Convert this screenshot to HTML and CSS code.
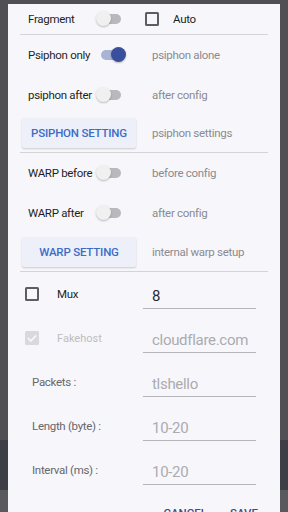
FILE: index.html
```html
<!DOCTYPE html>
<html>
<head>
<meta charset="utf-8">
<link rel="stylesheet" href="styles.css">
</head>
<body>
<div class="dialog">
  <div class="row r1">
    <div class="cell">
      <span class="label sl">Fragment</span>
      <span class="switch"><span class="track"></span><span class="thumb"></span></span>
    </div>
    <div class="cell2 cb-cell"><span class="checkbox"></span><span class="label auto">Auto</span></div>
  </div>
  <div class="divider"></div>
  <div class="row r40">
    <div class="cell">
      <span class="label sl">Psiphon only</span>
      <span class="switch on"><span class="track"></span><span class="thumb"></span></span>
    </div>
    <div class="cell2 hint">psiphon alone</div>
  </div>
  <div class="row r39">
    <div class="cell">
      <span class="label sl">psiphon after</span>
      <span class="switch"><span class="track"></span><span class="thumb"></span></span>
    </div>
    <div class="cell2 hint">after config</div>
  </div>
  <div class="row rbtn">
    <div class="cell"><button class="btn">PSIPHON SETTING</button></div>
    <div class="cell2 hint">psiphon settings</div>
  </div>
  <div class="divider"></div>
  <div class="row r40">
    <div class="cell">
      <span class="label sl">WARP before</span>
      <span class="switch"><span class="track"></span><span class="thumb"></span></span>
    </div>
    <div class="cell2 hint">before config</div>
  </div>
  <div class="row r40">
    <div class="cell">
      <span class="label sl">WARP after</span>
      <span class="switch"><span class="track"></span><span class="thumb"></span></span>
    </div>
    <div class="cell2 hint">after config</div>
  </div>
  <div class="row rbtn">
    <div class="cell"><button class="btn">WARP SETTING</button></div>
    <div class="cell2 hint">internal warp setup</div>
  </div>
  <div class="divider"></div>
  <div class="frow">
    <div class="fcell"><span class="checkbox"></span><span class="label mux">Mux</span></div>
    <div class="input"><span class="val">8</span></div>
  </div>
  <div class="frow">
    <div class="fcell"><span class="checkbox checked"><svg viewBox="0 0 14 14" width="14" height="14"><rect x="0" y="0" width="14" height="14" rx="1.5" fill="#d9d9dc"/><path d="M3 7.2 L5.8 10 L11.2 4.4" fill="none" stroke="#f7f7fb" stroke-width="1.8"/></svg></span><span class="label fake">Fakehost</span></div>
    <div class="input"><span class="val ph">cloudflare.com</span></div>
  </div>
  <div class="frow">
    <div class="fcell"><span class="plabel">Packets :</span></div>
    <div class="input"><span class="val ph">tlshello</span></div>
  </div>
  <div class="frow">
    <div class="fcell"><span class="plabel">Length (byte) :</span></div>
    <div class="input"><span class="val ph">10-20</span></div>
  </div>
  <div class="frow">
    <div class="fcell"><span class="plabel">Interval (ms) :</span></div>
    <div class="input"><span class="val ph">10-20</span></div>
  </div>
  <div class="actions">
    <span class="act">CANCEL</span>
    <span class="act">SAVE</span>
  </div>
</div>
</body>
</html>
```
FILE: styles.css
```css
html, body {
  margin: 0;
  padding: 0;
  height: 512px;
  overflow: hidden;
}
body {
  font-family: Roboto, "Noto Sans", sans-serif;
  background: linear-gradient(to bottom, #4f4f54 0, #4f4f54 440px, #3e3f46 440px, #3e3f46 490px, #5a5a5e 490px);
}
.dialog {
  margin: 0 8px;
  width: 248px;
  height: 560px;
  padding: 0 12px;
  background: #f7f7fb;
}
.divider {
  height: 1px;
  background: #d3d3d8;
}
.row {
  display: grid;
  grid-template-columns: 132px 1fr;
  align-items: center;
}
.r1 { height: 30px; margin-top: 4px; }
.r40 { height: 40px; }
.r39 { height: 39px; }
.rbtn { height: 38px; }
.cell {
  display: flex;
  align-items: center;
  padding-left: 8px;
}
.label {
  font-size: 11.5px;
  letter-spacing: -0.3px;
  color: #1f1f23;
}
.sl {
  min-width: 68px;
  white-space: nowrap;
}
.hint {
  font-size: 11.5px;
  letter-spacing: -0.3px;
  color: #8a8a8f;
}
.switch {
  position: relative;
  flex: none;
  width: 26px;
  height: 16px;
}
.switch .track {
  position: absolute;
  left: 3px;
  top: 3px;
  width: 22px;
  height: 10px;
  border-radius: 5px;
  background: #b9b9bd;
}
.switch .thumb {
  position: absolute;
  left: 0;
  top: 0;
  width: 15px;
  height: 15px;
  border-radius: 50%;
  background: #f0f0f0;
  box-shadow: 0 1px 2px rgba(0,0,0,0.25);
}
.switch.on { margin-left: 5px; }
.switch.on .track { background: #a8b3d6; left: 0; }
.switch.on .thumb {
  left: 10px;
  background: #3a4f9c;
}
.cb-cell {
  display: flex;
  align-items: center;
  margin-left: -7px;
}
.checkbox {
  display: inline-block;
  flex: none;
  box-sizing: border-box;
  width: 14px;
  height: 14px;
  border: 2px solid #5d5d62;
  border-radius: 1.5px;
}
.checkbox.checked {
  border: none;
}
.checkbox.checked svg { display: block; }
.auto { margin-left: 14px; }
.btn {
  margin-left: -6px;
  width: 114px;
  height: 30px;
  border: none;
  border-radius: 2px;
  background: #edf0f9;
  box-shadow: 0 1px 2px rgba(0,0,0,0.18);
  color: #3d6cc6;
  font-family: Roboto, "Noto Sans", sans-serif;
  font-size: 11.5px;
  letter-spacing: -0.2px;
  font-weight: 500;
  padding: 0;
}
.frow {
  display: grid;
  grid-template-columns: 123px 113px;
  height: 44px;
  align-items: center;
}
.fcell {
  display: flex;
  align-items: center;
  padding-left: 5px;
}
.mux { margin-left: 18px; }
.fake {
  margin-left: 18px;
  font-size: 11px;
  letter-spacing: 0;
  color: #bdbdc1;
}
.plabel {
  margin-left: 7px;
  font-size: 11.5px;
  letter-spacing: -0.3px;
  color: #66666b;
}
.input {
  height: 26px;
  border-bottom: 1px solid #b5b5ba;
  margin-top: 4px;
  box-sizing: border-box;
  display: flex;
  align-items: center;
  padding-left: 9px;
}
.val {
  font-size: 15px;
  letter-spacing: -0.3px;
  color: #2a2a2e;
}
.val.ph { color: #ababb0; }
.actions {
  display: flex;
  justify-content: flex-end;
  gap: 23px;
  padding-right: 10px;
  padding-top: 14px;
}
.act {
  font-size: 11.5px;
  font-weight: 500;
  color: #3b4c8c;
}
```
